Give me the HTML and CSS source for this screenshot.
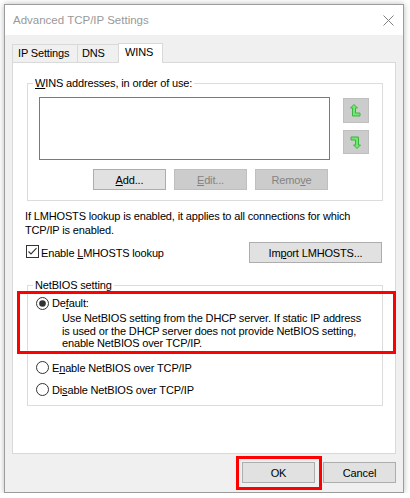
FILE: index.html
```html
<!DOCTYPE html>
<html>
<head>
<meta charset="utf-8">
<title>Advanced TCP/IP Settings</title>
<link rel="stylesheet" href="styles.css">
</head>
<body>
<div class="window">
  <div class="titlebar">
    <span class="title">Advanced TCP/IP Settings</span>
    <svg class="close" width="11" height="11" viewBox="0 0 11 11"><path d="M0.5 0.5 L10.5 10.5 M10.5 0.5 L0.5 10.5" stroke="#808080" stroke-width="1" fill="none"/></svg>
  </div>
  <div class="body">
    <div class="tabs">
      <div class="tab tab-ip">IP Settings</div>
      <div class="tab tab-dns">DNS</div>
      <div class="tab tab-wins active">WINS</div>
    </div>
    <div class="panel">
      <fieldset class="group group-wins">
        <legend><u>W</u>INS addresses, in order of use:</legend>
        <div class="list-row">
          <div class="listbox"></div>
          <div class="arrows">
            <div class="arrow-btn up">
              <svg width="11" height="13" viewBox="0 0 11 13"><polygon points="4,0.5 7.5,4 5.5,4 5.5,9 10,9 10,12 2.5,12 2.5,4 0.5,4" fill="#6fe86f" stroke="#3fb33f" stroke-width="1"/></svg>
            </div>
            <div class="arrow-btn down">
              <svg width="11" height="13" viewBox="0 0 11 13"><polygon points="4,0.5 7.5,4 5.5,4 5.5,9 10,9 10,12 2.5,12 2.5,4 0.5,4" transform="rotate(180 5.5 6.5)" fill="#6fe86f" stroke="#3fb33f" stroke-width="1"/></svg>
            </div>
          </div>
        </div>
        <div class="btn-row">
          <button class="btn"><u>A</u>dd...</button>
          <button class="btn disabled"><u>E</u>dit...</button>
          <button class="btn disabled">Remo<u>v</u>e</button>
        </div>
      </fieldset>
      <p class="note">If LMHOSTS lookup is enabled, it applies to all connections for which<br>TCP/IP is enabled.</p>
      <div class="check-row">
        <label class="check">
          <svg class="checkbox" width="13" height="13" viewBox="0 0 13 13"><rect x="0.5" y="0.5" width="12" height="12" fill="#fff" stroke="#333"/><path d="M2.5 6.5 L5 9 L10.5 3.2" stroke="#333" stroke-width="1.1" fill="none"/></svg>
          <span>Enable <u>L</u>MHOSTS lookup</span>
        </label>
        <button class="btn btn-import">Im<u>p</u>ort LMHOSTS...</button>
      </div>
      <fieldset class="group group-netbios">
        <legend>NetBIOS setting</legend>
        <div class="option-default">
          <div class="radio-row">
            <svg class="radio" width="13" height="13" viewBox="0 0 13 13"><circle cx="6.5" cy="6.5" r="6" fill="#fff" stroke="#333"/><circle cx="6.5" cy="6.5" r="3.3" fill="#333"/></svg>
            <span>De<u>f</u>ault:</span>
          </div>
          <p class="desc">Use NetBIOS setting from the DHCP server. If static IP address<br>is used or the DHCP server does not provide NetBIOS setting,<br>enable NetBIOS over TCP/IP.</p>
          <div class="highlight hl-default"></div>
        </div>
        <div class="radio-row row-enable">
          <svg class="radio" width="13" height="13" viewBox="0 0 13 13"><circle cx="6.5" cy="6.5" r="6" fill="#fff" stroke="#333"/></svg>
          <span>E<u>n</u>able NetBIOS over TCP/IP</span>
        </div>
        <div class="radio-row row-disable">
          <svg class="radio" width="13" height="13" viewBox="0 0 13 13"><circle cx="6.5" cy="6.5" r="6" fill="#fff" stroke="#333"/></svg>
          <span>Di<u>s</u>able NetBIOS over TCP/IP</span>
        </div>
      </fieldset>
    </div>
    <div class="footer">
      <div class="ok-wrap">
        <button class="btn">OK</button>
        <div class="highlight hl-ok"></div>
      </div>
      <button class="btn">Cancel</button>
    </div>
  </div>
</div>
</body>
</html>
```

FILE: styles.css
```css
* { box-sizing: border-box; }

body {
  margin: 0;
  background: #ffffff;
  font-family: "Liberation Sans", Arial, sans-serif;
  font-size: 11px;
  letter-spacing: -0.15px;
  color: #000;
}

.window {
  margin: 4px 0 0 4px;
  width: 400px;
  height: 489px;
  border: 1px solid #9c9c9c;
  box-shadow: 0 0 6px rgba(0, 0, 0, 0.28);
  background: #f0f0f0;
  display: flex;
  flex-direction: column;
}

.titlebar {
  flex: none;
  height: 30px;
  background: #fff;
  display: flex;
  align-items: center;
  justify-content: space-between;
  padding: 0 9px 0 8px;
}

.title {
  font-size: 11.5px;
  letter-spacing: 0;
  color: #999;
}

.close { display: block; }

.body {
  flex: 1;
  display: flex;
  flex-direction: column;
  padding: 8px 7px 9px 7px;
}

.tabs {
  flex: none;
  display: flex;
  align-items: flex-end;
  height: 19px;
}

.tab {
  height: 18px;
  border: 1px solid #d9d9d9;
  border-bottom: none;
  background: #f0f0f0;
  line-height: 14px;
  padding-top: 1px;
  white-space: nowrap;
}

.tab-ip { width: 66px; padding-left: 5px; }
.tab-dns { width: 42px; margin-left: -1px; padding-left: 4px; }
.tab-wins { width: 45px; margin-left: -1px; padding-left: 6px; }

.tab.active {
  height: 20px;
  background: #fff;
  margin-bottom: -1px;
  position: relative;
  z-index: 1;
}

.panel {
  flex: none;
  height: 392px;
  border: 1px solid #d9d9d9;
  background: #fff;
  display: flex;
  flex-direction: column;
}

.group {
  margin: 13px 12px 0 14px;
  padding: 0;
  border: 1px solid #dcdcdc;
  min-width: 0;
}

.group legend {
  margin-left: 5px;
  padding: 0 2px;
  line-height: 14px;
}

.list-row {
  display: flex;
  margin: 7px 0 0 11px;
}

.listbox {
  width: 291px;
  height: 63px;
  border: 1px solid #7a7a7a;
  background: #fff;
}

.arrows {
  display: flex;
  flex-direction: column;
  gap: 7px;
  margin: 1px 0 0 13px;
}

.arrow-btn {
  width: 26px;
  height: 25px;
  background: #cccccc;
  border: 1px solid #bfbfbf;
  display: flex;
  align-items: center;
  justify-content: center;
}

.arrow-btn.down { height: 24px; }
.arrow-btn svg { display: block; margin-left: -1px; }

.btn-row {
  display: flex;
  gap: 8px;
  margin: 9px 0 10px 65px;
}

.btn {
  height: 21px;
  width: 73px;
  padding: 0;
  background: #e1e1e1;
  border: 1px solid #adadad;
  font: inherit;
  letter-spacing: inherit;
  color: #000;
  line-height: 14px;
}

.btn.disabled {
  background: #cccccc;
  border-color: #bfbfbf;
  color: #838383;
}

.note {
  margin: 8px 0 0 12px;
  line-height: 14px;
  white-space: nowrap;
}

.check-row {
  display: flex;
  align-items: center;
  justify-content: space-between;
  margin: 5px 13px 0 13px;
  height: 21px;
}

.check {
  display: flex;
  align-items: center;
  gap: 2px;
  line-height: 14px;
  margin-top: 1px;
}

.checkbox { display: block; margin-top: -3px; }

.btn-import { width: 133px; }

.group-netbios {
  margin-top: 15px;
  padding-bottom: 8px;
}

.option-default {
  position: relative;
  margin-top: 4px;
}

.radio-row {
  display: flex;
  align-items: center;
  gap: 3px;
  margin-left: 8px;
  line-height: 14px;
}

.radio { display: block; }

.desc {
  margin: 2px 0 0 34px;
  line-height: 12.5px;
  white-space: nowrap;
}

.row-enable { margin-top: 11px; }
.row-disable { margin-top: 8px; }

.footer {
  display: flex;
  justify-content: flex-end;
  gap: 8px;
  margin-top: 8px;
}

.ok-wrap { position: relative; }
.ok-wrap .btn { display: block; }

.highlight {
  position: absolute;
  border: 3px solid #ff0000;
  pointer-events: none;
}

.hl-default {
  left: -11px;
  right: -14px;
  top: -5px;
  bottom: -4px;
}

.hl-ok {
  left: -6px;
  right: -7px;
  top: -6px;
  bottom: -7px;
}
```
